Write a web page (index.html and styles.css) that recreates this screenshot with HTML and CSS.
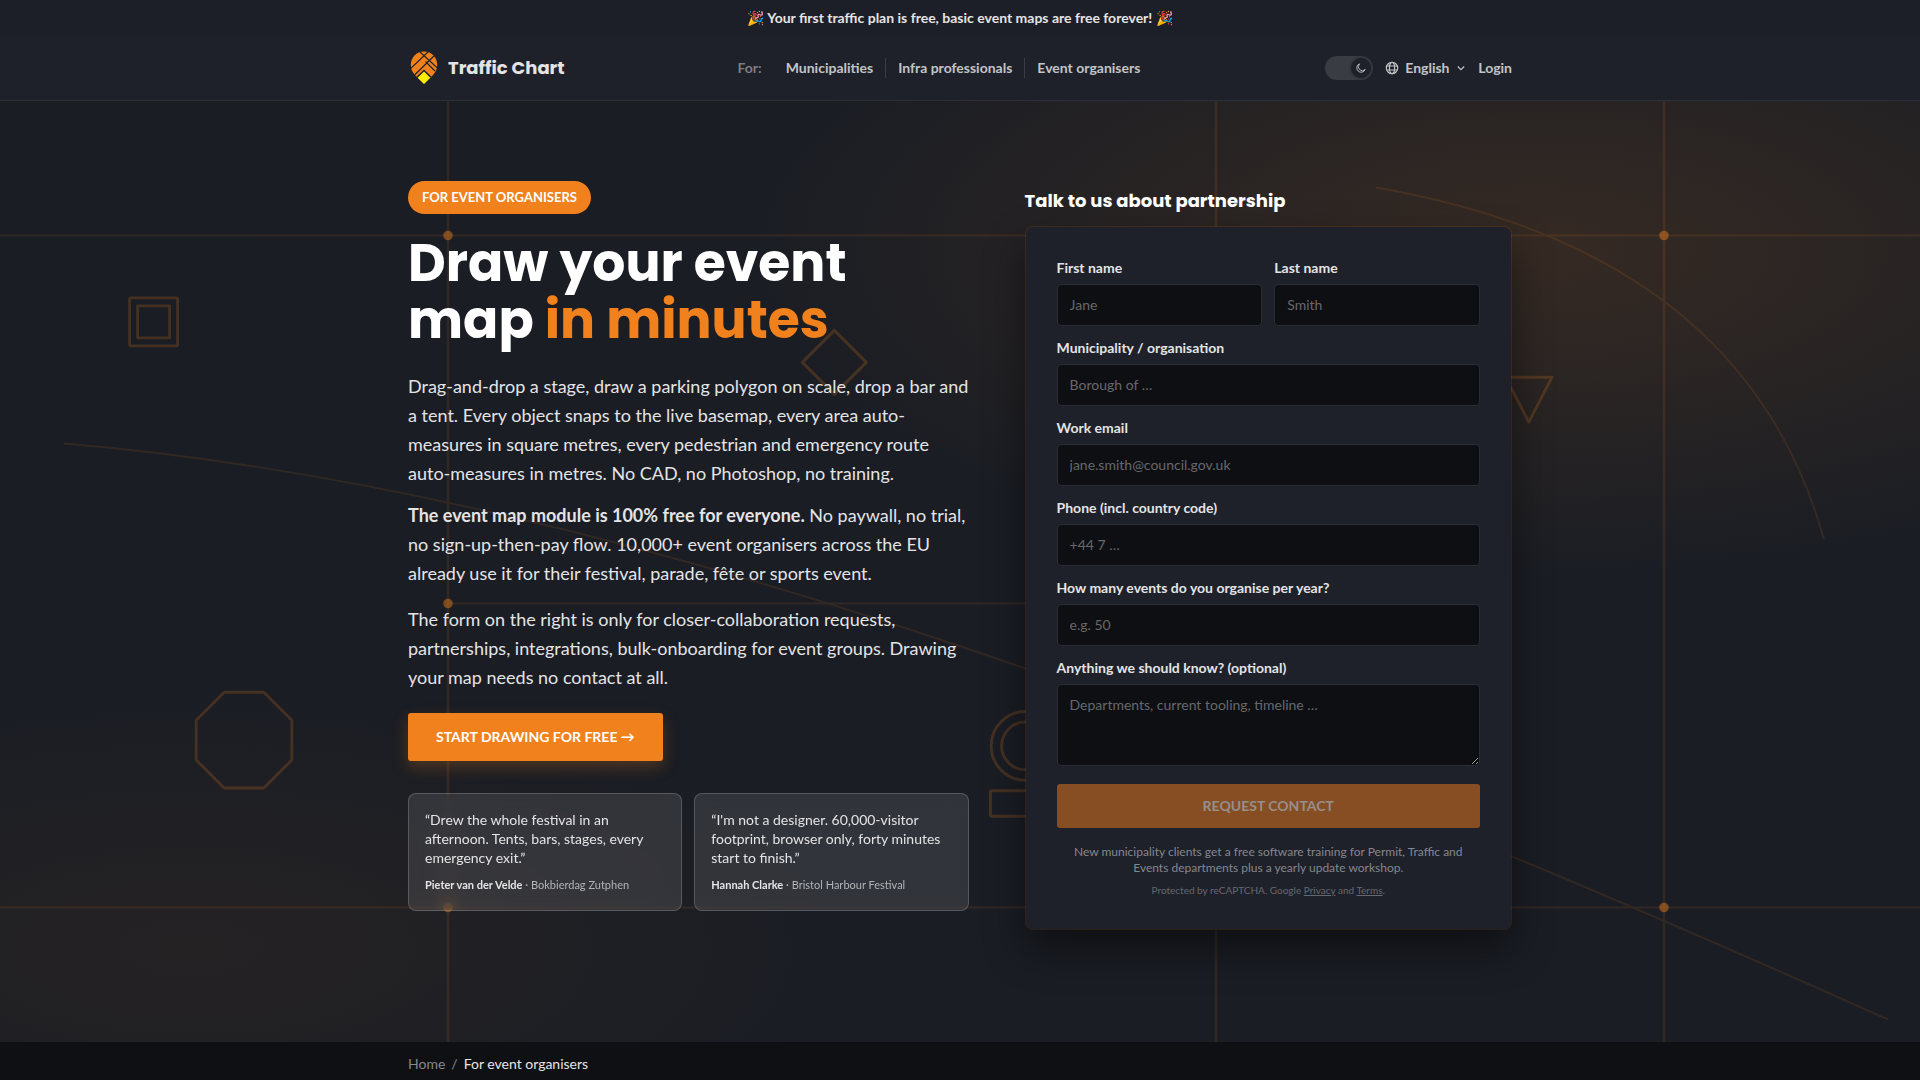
FILE: index.html
```html
<!DOCTYPE html>
<html lang="en">
<head>
  <meta charset="UTF-8">
  <meta name="viewport" content="width=device-width, initial-scale=1.0">
  <title>Traffic Chart - For event organisers</title>
  <link rel="stylesheet" href="styles.css">
</head>
<body>
  <div class="topbar">🎉 Your first traffic plan is free, basic event maps are free forever! 🎉</div>

  <header class="header">
    <div class="container header-inner">
      <a class="brand" href="#">
        <svg class="brand-logo" viewBox="0 0 28 34" aria-hidden="true">
          <defs>
            <clipPath id="pin"><path d="M14 .5C6.300 .5 .8 6.400 .8 14c0 3.800 1.600 7.300 4.200 10L14 33l9-9c2.600-2.700 4.200-6.200 4.200-10C27.200 6.400 21.700 .5 14 .5z"/></clipPath>
          </defs>
          <g clip-path="url(#pin)">
            <rect width="28" height="34" fill="#f0811c"/>
            <path d="M0 18L19 0M4 24.500L25 4M9 0L28 17.500M15.500 10.500L25 20" fill="none" stroke="#1e2129" stroke-width="1.200"/>
            <path d="M14 18.500L29 33H-1z" fill="#1e2129"/>
          </g>
          <path d="M14 20.500L20.300 26.700L14 33L7.700 26.700z" fill="#ffed00"/>
        </svg>
        <span>Traffic Chart</span>
      </a>

      <nav class="nav">
        <span class="nav-label">For:</span>
        <a class="nav-link" href="#">Municipalities</a>
        <a class="nav-link" href="#">Infra professionals</a>
        <a class="nav-link" href="#">Event organisers</a>
      </nav>

      <div class="header-tools">
        <label class="theme">
          <input class="theme-input" type="checkbox" aria-label="Dark theme" checked>
          <span class="theme-knob">
            <svg viewBox="0 0 16 16" aria-hidden="true"><path d="M6 2.500A5.800 5.800 0 1 0 13.600 10 5 5 0 0 1 6 2.500z"/></svg>
          </span>
        </label>
        <div class="lang">
          <svg class="lang-globe" viewBox="0 0 14 14" aria-hidden="true"><circle cx="7" cy="7" r="5.700"/><ellipse cx="7" cy="7" rx="2.600" ry="5.700"/><path d="M1.800 5h10.400M1.800 9h10.400"/></svg>
          <select class="lang-select" aria-label="Language">
            <option>English</option>
          </select>
          <svg class="lang-arrow" viewBox="0 0 10 10" aria-hidden="true"><path d="M1.800 3.500L5 6.700l3.200-3.200"/></svg>
        </div>
        <a class="login" href="#">Login</a>
      </div>
    </div>
  </header>

  <main>
    <section class="hero">
      <svg class="hero-art" viewBox="0 0 1200 700" preserveAspectRatio="xMidYMid slice" aria-hidden="true">
        <g class="roads">
          <path d="M0 140H1200M280 370H760M0 560H1200"/>
          <path class="road-wide" d="M280 0V700M760 0V700M1040 0V700"/>
          <path d="M40 270C400 300 800 460 1180 630"/>
          <path d="M860 110Q1090 150 1140 330"/>
        </g>
        <g class="signs">
          <rect x="81" y="179" width="30" height="30" rx="1"/>
          <rect x="86" y="184" width="20" height="20"/>
          <path d="M140.100 425.500h24.800l17.500 17.500v24.800l-17.500 17.500h-24.800l-17.500-17.500v-24.800z"/>
          <path d="M521.500 199.300l20 20-20 20-20-20z"/>
          <path d="M941 228.600h29l-14.500 28z"/>
          <circle cx="641" cy="459" r="21.500"/>
          <circle cx="641" cy="459" r="15"/>
          <rect x="619" y="487" width="44" height="16" rx="1"/>
        </g>
        <g class="nodes">
          <circle cx="280" cy="140" r="3"/>
          <circle cx="1040" cy="140" r="3"/>
          <circle cx="280" cy="370" r="3"/>
          <circle cx="280" cy="560" r="3"/>
          <circle cx="1040" cy="560" r="3"/>
        </g>
      </svg>

      <div class="container hero-grid">
        <div class="intro">
          <span class="pill">For event organisers</span>
          <h1 class="title">Draw your event map <em>in minutes</em></h1>
          <p class="lead">Drag-and-drop a stage, draw a parking polygon on scale, drop a bar and a tent. Every object snaps to the live basemap, every area auto-measures in square metres, every pedestrian and emergency route auto-measures in metres. No CAD, no Photoshop, no training.</p>
          <p class="lead"><strong>The event map module is 100% free for everyone.</strong> No paywall, no trial, no sign-up-then-pay flow. 10,000+ event organisers across the EU already use it for their festival, parade, fête or sports event.</p>
          <p class="lead lead-last">The form on the right is only for closer-collaboration requests, partnerships, integrations, bulk-onboarding for event groups. Drawing your map needs no contact at all.</p>
          <a class="cta" href="#">Start drawing for free →</a>
          <div class="quotes">
            <figure class="quote">
              <blockquote>“Drew the whole festival in an afternoon. Tents, bars, stages, every emergency exit.”</blockquote>
              <figcaption><strong>Pieter van der Velde</strong> · Bokbierdag Zutphen</figcaption>
            </figure>
            <figure class="quote">
              <blockquote>“I'm not a designer. 60,000-visitor footprint, browser only, forty minutes start to finish.”</blockquote>
              <figcaption><strong>Hannah Clarke</strong> · Bristol Harbour Festival</figcaption>
            </figure>
          </div>
        </div>

        <div class="contact">
          <h2 class="contact-title">Talk to us about partnership</h2>
          <form class="card">
            <div class="field-row">
              <div class="field">
                <label for="first">First name</label>
                <input id="first" type="text" placeholder="Jane">
              </div>
              <div class="field">
                <label for="last">Last name</label>
                <input id="last" type="text" placeholder="Smith">
              </div>
            </div>
            <div class="field">
              <label for="org">Municipality / organisation</label>
              <input id="org" type="text" placeholder="Borough of …">
            </div>
            <div class="field">
              <label for="email">Work email</label>
              <input id="email" type="email" placeholder="jane.smith@council.gov.uk">
            </div>
            <div class="field">
              <label for="phone">Phone (incl. country code)</label>
              <input id="phone" type="tel" placeholder="+44 7 …">
            </div>
            <div class="field">
              <label for="events">How many events do you organise per year?</label>
              <input id="events" type="text" placeholder="e.g. 50">
            </div>
            <div class="field">
              <label for="notes">Anything we should know? (optional)</label>
              <textarea id="notes" placeholder="Departments, current tooling, timeline …"></textarea>
            </div>
            <button class="submit" type="submit" disabled>Request contact</button>
            <p class="note">New municipality clients get a free software training for Permit, Traffic and Events departments plus a yearly update workshop.</p>
            <p class="legal">Protected by reCAPTCHA. Google <a href="#">Privacy</a> and <a href="#">Terms</a>.</p>
          </form>
        </div>
      </div>
    </section>

    <nav class="crumbs" aria-label="Breadcrumb">
      <div class="container crumbs-inner">
        <a href="#">Home</a>
        <span>/</span>
        <span class="crumbs-current">For event organisers</span>
      </div>
    </nav>
  </main>
</body>
</html>
```

FILE: styles.css
```css
:root {
  --orange: #f0811c;
  --bg: #1a1d24;
  --panel: #1e2129;
  --dark: #0f1013;
  --heading: Poppins, Inter, sans-serif;
}

* { box-sizing: border-box; }

body {
  margin: 0;
  background: var(--dark);
  color: #e4e4e6;
  font-family: Lato, sans-serif;
  font-size: 14px;
  line-height: 20px;
}

a { color: inherit; text-decoration: none; }

h1, h2, p, figure, blockquote { margin: 0; }

.container {
  max-width: 1152px;
  margin: 0 auto;
  padding: 0 24px;
}

.topbar {
  padding: 8px 24px;
  background: #1c1f27;
  font-weight: 700;
  text-align: center;
}

/* Header */
.header {
  background: var(--panel);
  border-bottom: 1px solid #2c2f38;
}

.header-inner {
  display: flex;
  align-items: center;
  justify-content: space-between;
  height: 64px;
}

.brand {
  display: flex;
  align-items: center;
  gap: 10px;
  padding-left: 2px;
  font: 700 18px/28px var(--heading);
}

.brand-logo { width: 28px; height: 34px; }

.nav {
  display: flex;
  align-items: center;
  color: #c3c4c7;
  font-weight: 700;
}

.nav-label { padding-right: 12px; color: #7c7e85; }
.nav-link { padding: 0 12px; }
.nav-link + .nav-link { border-left: 1px solid #3a3d45; }

.header-tools {
  display: flex;
  align-items: center;
  gap: 12px;
  color: #c3c4c7;
  font-weight: 700;
}

.theme {
  display: flex;
  justify-content: flex-end;
  width: 48px;
  height: 24px;
  padding: 2px;
  border-radius: 12px;
  background: #3a3c44;
  cursor: pointer;
}

.theme-input {
  position: absolute;
  opacity: 0;
}

.theme-knob {
  display: grid;
  place-items: center;
  width: 20px;
  height: 20px;
  border-radius: 50%;
  background: var(--panel);
  box-shadow: 0 0 3px rgba(0, 0, 0, 0.4);
}

.theme-knob svg { width: 12px; height: 12px; }

.theme-knob svg,
.lang svg {
  fill: none;
  stroke: currentColor;
  stroke-width: 1.2;
}

.lang {
  display: flex;
  align-items: center;
  gap: 6px;
}

.lang-globe { width: 14px; height: 14px; }
.lang-arrow { width: 10px; height: 10px; }

.lang-select {
  appearance: none;
  padding: 0;
  border: 0;
  background: none;
  color: inherit;
  font: inherit;
}

/* Hero */
.hero {
  position: relative;
  padding: 80px 0 112px;
  overflow: hidden;
  background:
    radial-gradient(ellipse 60% 50% at 80% 16%, rgba(240, 129, 28, 0.13), transparent 70%),
    radial-gradient(ellipse 50% 40% at 10% 90%, rgba(240, 129, 28, 0.05), transparent 70%),
    var(--bg);
}

.hero-art {
  position: absolute;
  inset: 0;
  width: 100%;
  height: 100%;
}

.roads, .signs { fill: none; stroke: var(--orange); }
.roads { stroke-width: 1.2; opacity: 0.11; }
.road-wide { stroke-width: 1.6; }
.signs { stroke-width: 1.8; stroke-linejoin: round; opacity: 0.2; }
.nodes { fill: var(--orange); opacity: 0.45; }

.hero-grid {
  position: relative;
  display: grid;
  grid-template-columns: 1.15fr 1fr;
  gap: 56px;
  align-items: start;
}

.pill {
  display: inline-block;
  padding: 6px 14px;
  border-radius: 17px;
  background: var(--orange);
  color: #fff;
  font-size: 13px;
  font-weight: 700;
  line-height: 21px;
  text-transform: uppercase;
}

.title {
  margin: 20px 0 24px;
  color: #fff;
  font: 700 52px/57px var(--heading);
}

.title em { color: var(--orange); font-style: normal; }

.lead {
  margin-bottom: 13px;
  font-size: 18px;
  line-height: 29px;
}

.lead-last { margin: 17px 0 21px; }

.cta {
  display: inline-block;
  padding: 14px 28px;
  border-radius: 3px;
  background: var(--orange);
  box-shadow: 0 6px 16px rgba(240, 129, 28, 0.25);
  color: #fff;
  font-weight: 700;
  text-transform: uppercase;
}

.quotes {
  display: grid;
  grid-template-columns: 1fr 1fr;
  gap: 12px;
  margin-top: 32px;
}

.quote {
  padding: 16px;
  border: 1px solid rgba(255, 255, 255, 0.18);
  border-radius: 8px;
  background: rgba(255, 255, 255, 0.1);
  backdrop-filter: blur(8px);
  line-height: 19px;
}

.quote figcaption {
  margin-top: 8px;
  color: #b3b4b8;
  font-size: 11px;
}

.quote strong { color: #e4e4e6; }

/* Contact form */
.contact-title {
  margin: 6px 0 11px;
  color: #fff;
  font: 700 18px/28px var(--heading);
}

.card {
  padding: 31px;
  border: 1px solid rgba(240, 129, 28, 0.12);
  border-radius: 8px;
  background: var(--panel);
  background-clip: padding-box;
  box-shadow: 0 20px 40px rgba(0, 0, 0, 0.45);
}

.field-row {
  display: grid;
  grid-template-columns: 1fr 1fr;
  gap: 12px;
}

.field { margin-bottom: 12px; }

.field label {
  display: block;
  margin-bottom: 6px;
  font-weight: 700;
}

.field input,
.field textarea {
  display: block;
  width: 100%;
  height: 42px;
  padding: 9px 12px 11px;
  border: 1px solid #2a2d35;
  border-radius: 4px;
  background: #0e0f13;
  color: #e4e4e6;
  font: inherit;
}

.field textarea {
  height: 82px;
  padding: 10px 12px;
  resize: vertical;
}

.field ::placeholder { color: #66686d; }

.submit {
  width: 100%;
  margin-top: 6px;
  padding: 12px;
  border: 0;
  border-radius: 3px;
  background: #874e23;
  color: #94908e;
  font: inherit;
  font-weight: 700;
  text-transform: uppercase;
}

.note,
.legal {
  margin-top: 16px;
  color: #85878e;
  font-size: 12px;
  line-height: 16px;
  text-align: center;
}

.legal {
  margin-top: 6px;
  color: #66686f;
  font-size: 10px;
}

.legal a { text-decoration: underline; }

/* Breadcrumb */
.crumbs { background: var(--dark); }

.crumbs-inner {
  display: flex;
  gap: 6px;
  padding-top: 12px;
  padding-bottom: 12px;
  color: #85878e;
}

.crumbs-current { color: #e4e4e6; }
```
